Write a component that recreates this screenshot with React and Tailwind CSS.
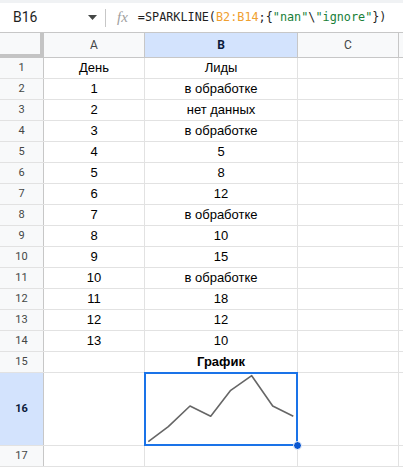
import React from "react";

const rows = [
  ["День", "Лиды"],
  ["1", "в обработке"],
  ["2", "нет данных"],
  ["3", "в обработке"],
  ["4", "5"],
  ["5", "8"],
  ["6", "12"],
  ["7", "в обработке"],
  ["8", "10"],
  ["9", "15"],
  ["10", "в обработке"],
  ["11", "18"],
  ["12", "12"],
  ["13", "10"],
];

function RowHead({ n, active, tall }) {
  return (
    <div
      className={`w-[44px] shrink-0 border-r border-r-[#c7c7c7] flex items-center justify-center text-[11px] ${
        active ? "bg-[#d3e3fd] text-[#0b1a3a] font-bold" : "bg-[#f8f9fa] text-[#444746]"
      } ${tall ? "" : ""}`}
      style={{ fontFamily: "Roboto, 'Liberation Sans', sans-serif" }}
    >
      {n}
    </div>
  );
}

function Cell({ w, children, bold }) {
  return (
    <div
      className={`${w} shrink-0 border-r border-r-[#e2e2e2] flex items-end justify-center pb-[1px] text-[13px] text-black ${
        bold ? "font-bold" : ""
      }`}
    >
      {children}
    </div>
  );
}

export default function App() {
  const pts = [
    [3.3, 68.7],
    [23.3, 53.7],
    [45, 33],
    [65.7, 43.3],
    [85.7, 17.3],
    [106.7, 2.7],
    [127.7, 33],
    [148.3, 43.3],
  ];
  return (
    <div
      className="w-[403px] h-[469px] overflow-hidden bg-white"
      style={{ fontFamily: "'Liberation Sans', Arial, sans-serif" }}
    >
      <div className="h-[3px] bg-[#f0f2f4]" />
      {/* formula bar */}
      <div className="h-[29px] flex items-center">
        <div className="w-[105px] shrink-0 flex items-center h-full">
          <span className="ml-[13px] text-[14px] text-[#1f1f1f]" style={{ fontFamily: "Roboto, sans-serif" }}>
            B16
          </span>
          <svg className="ml-[51px]" width="9" height="5" viewBox="0 0 9 5">
            <path d="M0 0 L9 0 L4.5 5 Z" fill="#444746" />
          </svg>
        </div>
        <div className="w-px h-[18px] bg-[#c7c7c7]" />
        <span
          className="ml-[11px] text-[15px] italic text-[#a0a0a0]"
          style={{ fontFamily: "'Liberation Serif', serif" }}
        >
          fx
        </span>
        <span
          className="ml-[10px] text-[11.8px] text-[#1f1f1f] whitespace-nowrap"
          style={{ fontFamily: "'DejaVu Sans Mono', monospace" }}
        >
          =SPARKLINE(<span className="text-[#f0a030]">B2:B14</span>;{"{"}
          <span className="text-[#188038]">"nan"</span>\<span className="text-[#188038]">"ignore"</span>
          {"})"}
        </span>
      </div>
      {/* column headers */}
      <div
        className="h-[26px] flex border-t border-b border-[#c7c7c7] text-[12px] text-[#444746]"
        style={{ fontFamily: "Roboto, 'Liberation Sans', sans-serif" }}
      >
        <div className="w-[44px] shrink-0 bg-[#f8f9fa] border-r-4 border-b-4 border-[#c4c4c4] -mb-px h-[25px] box-border" />
        <div className="w-[101px] shrink-0 bg-[#f8f9fa] border-r border-[#c7c7c7] flex items-center justify-center">A</div>
        <div className="w-[153px] shrink-0 bg-[#d3e3fd] border-r border-[#c7c7c7] flex items-center justify-center font-bold text-[#0b1a3a]">
          B
        </div>
        <div className="w-[101px] shrink-0 bg-[#f8f9fa] border-r border-[#c7c7c7] flex items-center justify-center">C</div>
        <div className="flex-1 bg-[#f8f9fa]" />
      </div>
      {rows.map((r, i) => (
        <div key={i} className="h-[21px] flex border-b border-[#e2e2e2]">
          <RowHead n={i + 1} />
          <Cell w="w-[101px]">{r[0]}</Cell>
          <Cell w="w-[153px]">{r[1]}</Cell>
          <Cell w="w-[101px]" />
        </div>
      ))}
      <div className="h-[21px] flex border-b border-[#e2e2e2]">
        <RowHead n={15} />
        <Cell w="w-[101px]" />
        <Cell w="w-[153px]" bold>
          График
        </Cell>
        <Cell w="w-[101px]" />
      </div>
      <div className="h-[73px] flex border-b border-[#e2e2e2]">
        <RowHead n={16} active />
        <Cell w="w-[101px]" />
        <div className="w-[153px] shrink-0 border-r border-r-[#e2e2e2] relative">
          <svg className="absolute left-0 top-0" width="152" height="72" viewBox="0 0 152 72">
            <polyline
              points={pts.map((p) => p.join(",")).join(" ")}
              fill="none"
              stroke="#666666"
              strokeWidth="1.6"
              strokeLinejoin="round"
            />
          </svg>
          <div className="absolute -left-[1px] -top-[1px] w-[154px] h-[74px] border-2 border-[#1a73e8]" />
          <div className="absolute -right-[5px] -bottom-[5px] w-[9px] h-[9px] rounded-full bg-[#0b57d0] border border-white" />
        </div>
        <Cell w="w-[101px]" />
      </div>
      <div className="h-[21px] flex border-b border-[#e2e2e2]">
        <RowHead n={17} />
        <Cell w="w-[101px]" />
        <Cell w="w-[153px]" />
        <Cell w="w-[101px]" />
      </div>
    </div>
  );
}
